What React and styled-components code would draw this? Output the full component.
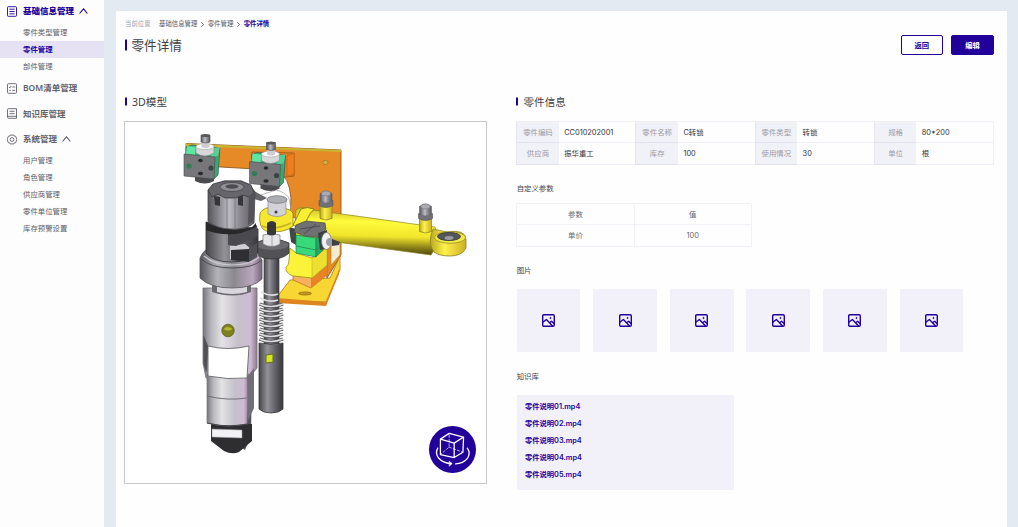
import React from 'react';
import styled, { createGlobalStyle, css } from 'styled-components';

const PRIMARY = '#22009a';

const GlobalStyle = createGlobalStyle`
  * { box-sizing: border-box; }
  body {
    margin: 0;
    background: #e4eaf2;
    color: #44444c;
    font-family: Inter, "Noto Sans CJK SC", sans-serif;
    overflow: hidden;
  }
`;

const Page = styled.div`
  display: flex;
  height: 527px;
  width: 1018px;
`;

const Sidebar = styled.nav`
  flex: none;
  width: 103.5px;
  background: #fdfdfe;
`;

const GroupHeader = styled.div`
  display: flex;
  align-items: center;
  height: ${(p) => (p.$first ? '24px' : '25.5px')};
  padding: 0 0 ${(p) => (p.$first ? '2px' : '0')} 7px;
  font: 600 8.5px/12px "Noto Sans", "Noto Sans CJK SC", sans-serif;
  font-weight: ${(p) => (p.$active ? 800 : 600)};
  color: ${(p) => (p.$active ? PRIMARY : '#62626b')};
  white-space: nowrap;
`;

const GroupIcon = styled.svg`
  flex: none;
  width: 10px;
  height: 11px;
  margin-right: 6px;
  fill: none;
  stroke: currentColor;
  stroke-width: 0.9;
`;

const Chevron = styled.svg`
  width: 9px;
  height: 6px;
  margin-left: 5px;
  fill: none;
  stroke: currentColor;
  stroke-width: 1.1;
`;

const SubItem = styled.div`
  height: 17.1px;
  padding-left: 23px;
  font-size: 7.4px;
  line-height: 17.6px;
  color: #5c5c64;
  font-weight: 400;
  ${(p) =>
    p.$active &&
    css`
      background: #e6e2f4;
      color: ${PRIMARY};
      font-weight: 700;
    `}
`;

const Panel = styled.main`
  flex: 1;
  margin: 11px 11px 0 12.5px;
  padding: 8px 13px 0 8px;
  background: #fefefe;
`;

const Breadcrumb = styled.div`
  display: flex;
  align-items: center;
  height: 10px;
  font-size: 6.4px;
  line-height: 10px;
  color: #55555d;
`;

const CrumbLabel = styled.span`
  width: 35px;
  padding-left: 1px;
  color: #a2a2aa;
`;

const CrumbArrow = styled.svg`
  width: 3px;
  height: 5px;
  margin: 0 3.7px;
  fill: none;
  stroke: #44444c;
  stroke-width: 0.8;
`;

const CrumbCurrent = styled.span`
  color: ${PRIMARY};
  font-weight: 700;
`;

const TitleRow = styled.header`
  display: flex;
  justify-content: space-between;
  height: 20px;
  margin-top: 6px;
`;

const Heading = styled.h2`
  display: flex;
  align-items: center;
  gap: ${(p) => (p.$large ? '4.5px' : '5px')};
  height: ${(p) => (p.$large ? '21px' : '14px')};
  margin: 0;
  padding-left: ${(p) => (p.$flush ? '0.3px' : '1px')};
  font: 400 ${(p) => (p.$large ? '12.6px/20px' : '10.6px/14px')} "Noto Sans", "Noto Sans CJK SC", sans-serif;
  color: #3e3e46;

  &::before {
    content: '';
    width: 2px;
    height: ${(p) => (p.$large ? '11px' : '8px')};
    background: ${PRIMARY};
    transform: translateY(-0.5px);
  }
`;

const Actions = styled.div`
  display: flex;
  gap: 8px;
`;

const Button = styled.button`
  width: ${(p) => (p.$filled ? '43px' : '42.5px')};
  height: 20px;
  padding: 0;
  border: 1.5px solid ${PRIMARY};
  border-radius: 2px;
  background: ${(p) => (p.$filled ? PRIMARY : '#fff')};
  color: ${(p) => (p.$filled ? '#fff' : PRIMARY)};
  font: 700 7.3px/16px "Noto Sans CJK SC", sans-serif;
`;

const Columns = styled.div`
  display: flex;
  gap: 29.2px;
  margin-top: 40px;
`;

const ModelColumn = styled.section`
  flex: none;
  width: 363px;
`;

const InfoColumn = styled.section`
  flex: 1;
`;

const ModelView = styled.div`
  position: relative;
  height: 363px;
  margin-top: 12px;
  border: 1px solid #c9c9cd;
  background: #fff;
`;

const ModelDrawing = styled.svg`
  display: block;
  width: 361px;
  height: 361px;
`;

const RotateButton = styled.button`
  position: absolute;
  right: 10.5px;
  bottom: 10.5px;
  width: 47px;
  height: 47px;
  padding: 0;
  border: 0;
  border-radius: 50%;
  background: ${PRIMARY};

  svg {
    display: block;
    width: 47px;
    height: 47px;
    fill: none;
    stroke: #fff;
    stroke-width: 3.8;
    stroke-linecap: round;
    stroke-linejoin: round;
  }
`;

const InfoGrid = styled.dl`
  display: grid;
  grid-template-columns: repeat(4, 42.5px 1fr);
  grid-auto-rows: 21.25px;
  margin: 12px 0 0;
  border: solid #f1eef7;
  border-width: 1px 1px 0 0;
  font-size: 7.4px;
  line-height: 21px;
`;

const InfoLabel = styled.dt`
  border-bottom: 1px solid #e4e1ee;
  border-left: 1px solid #e8e5f1;
  background: #f1f1f8;
  color: #9c9ca6;
  text-align: center;
`;

const InfoValue = styled.dd`
  margin: 0;
  padding-left: 5.5px;
  border-bottom: 1px solid #f1eef7;
  color: #34343c;
`;

const Label = styled.h3`
  height: 12px;
  margin: ${(p) => p.$top}px 0 0 0.5px;
  font-size: 7.4px;
  font-weight: 400;
  line-height: 12px;
`;

const ParamGrid = styled.div`
  display: grid;
  grid-template-columns: 117.5px 117px;
  grid-auto-rows: 21.25px;
  width: 235px;
  margin-top: 8.5px;
  border: solid #f3f0f8;
  border-width: 1px 0 0 1px;
`;

const ParamCell = styled.div`
  border: solid #f3f0f8;
  border-width: 0 1px 1px 0;
  color: #66666e;
  font-size: 7.4px;
  line-height: 21px;
  text-align: center;
`;

const Thumbs = styled.div`
  display: flex;
  gap: 12.9px;
  margin: 12.3px 0 0 0.5px;
`;

const Thumb = styled.div`
  display: grid;
  place-items: center;
  width: 63.7px;
  height: 63.5px;
  border-radius: 1px;
  background: #f2f1fa;

  svg {
    width: 13px;
    height: 13px;
    fill: none;
    stroke: ${PRIMARY};
    stroke-width: 1.4;
    stroke-linejoin: round;
  }
`;

const FileList = styled.ul`
  width: 217px;
  height: 95.5px;
  margin: 12px 0 0 0.5px;
  padding: 3.5px 0 0 8.2px;
  border-radius: 1px;
  background: #f2f1fa;
  list-style: none;
`;

const FileItem = styled.li`
  height: 17.05px;
  color: ${PRIMARY};
  font-size: 7.3px;
  font-weight: 600;
  line-height: 17.05px;
`;

const icons = {
  base: (
    <>
      <rect x="0.5" y="0.7" width="9" height="9.6" rx="0.8" />
      <path d="M2.4 3.2h5.2M2.4 5.5h5.2M2.4 7.8h5.2" />
    </>
  ),
  bom: (
    <>
      <rect x="0.5" y="0.7" width="9" height="9.6" rx="0.8" />
      <path d="M2 4l.9.8L4.2 3M5.4 4h2.8M2.2 7.4h1.6M5.4 7.4h2.8" />
    </>
  ),
  book: (
    <path d="M1.6.7h7.9v9.6H1.8C.9 10.3.5 9.8.5 9.1V1.7c0-.7.4-1 1.1-1zM.6 8.3h8.9M2.6 3.3h4.9M2.6 5.6h4.9" />
  ),
  gear: (
    <>
      <path d="M3 1.100h4l.6 1.200h1.100L9.800 5.500 8.700 8.700H7.600L7 9.900H3l-.6-1.200H1.300L.2 5.500l1.100-3.200h1.100z" />
      <circle cx="5" cy="5.500" r="1.900" />
    </>
  ),
};

const menu = [
  { title: '基础信息管理', icon: 'base', active: true, items: ['零件类型管理', '零件管理', '部件管理'] },
  { title: 'BOM清单管理', icon: 'bom' },
  { title: '知识库管理', icon: 'book' },
  { title: '系统管理', icon: 'gear', items: ['用户管理', '角色管理', '供应商管理', '零件单位管理', '库存预警设置'] },
];

const info = [
  ['零件编码', 'CC010202001'],
  ['零件名称', 'C转锁'],
  ['零件类型', '转锁'],
  ['规格', '80*200'],
  ['供应商', '振华重工'],
  ['库存', '100'],
  ['使用情况', '30'],
  ['单位', '根'],
];

const files = ['零件说明01.mp4', '零件说明02.mp4', '零件说明03.mp4', '零件说明04.mp4', '零件说明05.mp4'];

function Valve({ x, y }) {
  return (
    <g transform={`translate(${x} ${y})`}>
      <path d="M11 40h19v7q-9 5-19 0z" fill="#4b4b4f" />
      <path d="M2 13l6-2 28 3-2 27-4 4-28-4z" fill="#37a873" stroke="#3c5c4e" strokeWidth="0.7" />
      <path d="M3 12l9 1-1 8-9-1z" fill="#5fe5a4" />
      <path d="M28 14l8-1-2 9-7 1z" fill="#55cf95" />
      <path d="M0 20l31 3-1 22-30-3z" fill="#77777a" stroke="#4c4c50" strokeWidth="0.6" />
      <circle cx="5" cy="32" r="2.600" fill="#317c56" />
      <circle cx="27" cy="34" r="2.600" fill="#38463f" />
      <ellipse cx="16.500" cy="26.500" rx="2.300" ry="1.700" fill="#29292c" />
      <ellipse cx="16.500" cy="39.500" rx="2.600" ry="1.700" fill="#29292c" />
      <path d="M12 12h18v7q-9 6-18 0z" fill="#d7d7da" stroke="#8c8c91" strokeWidth="0.6" />
      <ellipse cx="21" cy="12.500" rx="9" ry="3" fill="#fafafb" stroke="#9a9a9f" strokeWidth="0.5" />
      <path d="M17.500 8h8v5q-4 2-8 0z" fill="#cdcdd2" />
      <path d="M17 1h9v7q-4 2-9 0z" fill="url(#steel)" stroke="#4a4a4e" strokeWidth="0.6" />
      <ellipse cx="21.500" cy="1.500" rx="4.500" ry="1.600" fill="#58585d" />
    </g>
  );
}

function Nipple({ x, y }) {
  return (
    <g transform={`translate(${x} ${y})`}>
      <path d="M1 14h12v14q-6 3-12 0z" fill="url(#brass)" stroke="#77711c" strokeWidth="0.6" />
      <path d="M0 10h14v5q-7 4-14 0z" fill="#717177" stroke="#505055" strokeWidth="0.6" />
      <path d="M1 3q6-5 12 0v8q-6 3-12 0z" fill="url(#steel)" stroke="#66666c" strokeWidth="0.6" />
      <ellipse cx="7" cy="3" rx="4.500" ry="2.400" fill="#aaaab1" stroke="#77777d" strokeWidth="0.6" />
    </g>
  );
}

function PartModel() {
  return (
    <ModelDrawing viewBox="125 122 361 361">
      <defs>
        <linearGradient id="steel">
          <stop offset="0" stopColor="#56565b" />
          <stop offset="0.25" stopColor="#8f8d94" />
          <stop offset="0.45" stopColor="#bcbac2" />
          <stop offset="0.65" stopColor="#918f96" />
          <stop offset="1" stopColor="#5b575e" />
        </linearGradient>
        <linearGradient id="body">
          <stop offset="0" stopColor="#77767c" />
          <stop offset="0.15" stopColor="#b9b7be" />
          <stop offset="0.35" stopColor="#e3e2e6" />
          <stop offset="0.65" stopColor="#c5c1ca" />
          <stop offset="0.88" stopColor="#cfbad4" />
          <stop offset="1" stopColor="#8d798f" />
        </linearGradient>
        <linearGradient id="collar">
          <stop offset="0" stopColor="#56555b" />
          <stop offset="0.28" stopColor="#b5b3ba" />
          <stop offset="0.55" stopColor="#8b8990" />
          <stop offset="0.85" stopColor="#bba8be" />
          <stop offset="1" stopColor="#75667a" />
        </linearGradient>
        <linearGradient id="dark">
          <stop offset="0" stopColor="#46464a" />
          <stop offset="0.35" stopColor="#929197" />
          <stop offset="0.65" stopColor="#67666c" />
          <stop offset="1" stopColor="#38363b" />
        </linearGradient>
        <linearGradient id="barrel" x1="0.54" y1="0" x2="0.46" y2="1">
          <stop offset="0.1" stopColor="#d6cb2c" />
          <stop offset="0.3" stopColor="#fffb3c" />
          <stop offset="0.6" stopColor="#f0e52b" />
          <stop offset="0.8" stopColor="#92871a" />
          <stop offset="1" stopColor="#3c380c" />
        </linearGradient>
        <linearGradient id="brass">
          <stop offset="0" stopColor="#b8aa22" />
          <stop offset="0.4" stopColor="#fff14a" />
          <stop offset="1" stopColor="#cbb126" />
        </linearGradient>
      </defs>

      {/* mounting plate */}
      <path d="M186 143.500l155 6.500v105l-14 23-6-50-31-12 1-18q-2-22-13-26l-5-2-87-5z" fill="#e68a28" stroke="#92571c" strokeWidth="0.9" />
      <path d="M186 143.500l155 6.500v2l-155-6z" fill="#c9b531" />
      <path d="M252 152l42 1v23l-8 1-35-8z" fill="#e07f22" stroke="#9a5418" strokeWidth="0.8" />
      <path d="M287 156l7-3v21l-7 2z" fill="#f07c1c" stroke="#b25f18" strokeWidth="0.5" />
      <ellipse cx="325.500" cy="162.500" rx="2.600" ry="2.200" fill="#d2b03e" stroke="#8e6923" strokeWidth="0.6" />
      <path d="M250 200q12-6 26-10q9 2 13 8 3 10 1 22" fill="none" stroke="#a5a5ab" strokeWidth="0.8" />
      <path d="M252 190l15 8-6 3-10-3z" fill="#66666b" />
      <Valve x={184} y={134} />
      <Valve x={249.500} y={141.500} />

      {/* lower bracket */}
      <path d="M290 280l40-2 10-22v14l-14 32-49-2v-3z" fill="#f8d735" stroke="#a87318" strokeWidth="0.8" />
      <path d="M277 298l49 4 12-30 1-3v5l-13 32-49-3z" fill="#df851f" />
      <ellipse cx="305" cy="293.500" rx="6.500" ry="1.600" fill="#c19521" stroke="#8d6519" strokeWidth="0.600" />
      <path d="M331 243l9-2v14l-9 10z" fill="#f3ecd0" stroke="#c28c24" strokeWidth="0.7" />

      {/* hydraulic cylinder */}
      <path d="M296 210q6-5 17 0l122 17q6 14-4 28l-95-13-41-7z" fill="url(#barrel)" stroke="#8d841f" strokeWidth="0.7" />
      <path d="M293 225l8-16q6-3 13 0-9 9-9 22z" fill="#f8ef35" stroke="#827820" strokeWidth="0.9" />
      <path d="M433 229q9 2 14 3 18-3 19 7v9q-4 8-16 8-11 0-16-4-7-9-1-23z" fill="url(#brass)" stroke="#8b8121" strokeWidth="0.8" />
      <ellipse cx="450" cy="237.500" rx="15.500" ry="5.800" fill="#f2ea46" stroke="#8f8527" strokeWidth="0.700" />
      <ellipse cx="449" cy="236.500" rx="11.500" ry="4" fill="#55555b" stroke="#38383c" strokeWidth="0.9" />
      <ellipse cx="449" cy="238" rx="4.500" ry="1.900" fill="#9a9aa0" />
      <Nipple x={319} y={190.500} />
      <Nipple x={418.500} y={203.500} />

      {/* clamp block */}
      <path d="M293 275l18 2 16-15v13l-16 13-18-8z" fill="#f9b05c" stroke="#b4691f" strokeWidth="0.7" />
      <path d="M311 277l16-14v12l-16 13z" fill="#e98326" />
      <path d="M290 248l6 5 16 5 15-10v17l-15 13-19-2q-8-3-7-9 3-2 3-7z" fill="#fbf33a" stroke="#9a8f1a" strokeWidth="0.8" />
      <path d="M312 258l15-10v17l-15 13z" fill="#ecdf2f" stroke="#b5a91e" strokeWidth="0.5" />
      <path d="M289 227l7 2v16l-5-3z" fill="#3f4846" />
      <path d="M296 235l20 3v19l-20-4z" fill="#37d97a" stroke="#247d4d" strokeWidth="0.7" />
      <path d="M316 238l7-5v17l-7 7z" fill="#27a860" stroke="#247d4d" strokeWidth="0.6" />
      <path d="M296 246l20 4 7-5" fill="none" stroke="#247d4d" strokeWidth="0.7" />
      <path d="M296 225l10-4 19 2 1 6-7 8-14-1-11-4z" fill="#707073" stroke="#48484c" strokeWidth="0.7" />
      <path d="M300 229l20-3M304 234l12-10" stroke="#4f4f53" />
      <path d="M318 233l9-3v18l-7 2z" fill="#3d4042" />
      <ellipse cx="326.500" cy="241" rx="5" ry="8.500" fill="#f1f1f4" stroke="#77777d" strokeWidth="0.8" />
      <circle cx="330" cy="242" r="4" fill="#9d9da4" />
      <path d="M332 239l8 3-1 3-7 1z" fill="#414148" />

      {/* guide rod with spring */}
      <path d="M264 254h15v90h-15z" fill="url(#dark)" stroke="#48484c" strokeWidth="0.7" />
      <path d="M255 243q17-8 34 0v10q-6 6-17 6t-17-6z" fill="#525156" stroke="#333337" strokeWidth="0.8" />
      <ellipse cx="272" cy="245" rx="16.500" ry="5" fill="#6b6a70" />
      <path d="M260 213q5-7 13-5 17-1 20 5v13q-9 8-27 5-8-3-6-18z" fill="#f6e831" stroke="#8e8117" strokeWidth="0.8" />
      <path d="M262 226q13 5 29-3" fill="none" stroke="#c4b41f" strokeWidth="1.800" />
      <path d="M268 199h18v15q-9 5-18 0z" fill="#d3d2d9" stroke="#86868c" strokeWidth="0.7" />
      <ellipse cx="277" cy="199.500" rx="10" ry="3.800" fill="#adadb4" stroke="#6f6f76" strokeWidth="0.7" />
      <circle cx="276" cy="212" r="1.500" fill="#3f3f44" />
      <path d="M263 235q8-3 17 0v9q-8 5-17 0z" fill="#e6e6ea" stroke="#77777c" strokeWidth="0.7" />
      <path d="M272 236v10" stroke="#909096" strokeWidth="0.8" />
      <path d="M267 223q5-4 9 0v11q-4 3-9 0z" fill="#38383c" />
      {[305, 310, 315, 320, 325, 330, 335, 340].map((y) => (
        <g key={y} fill="none">
          <path d={`M259.500 ${y - 1}q11 5 23.500 0`} stroke="#55555a" strokeWidth="3.200" />
          <path d={`M259.500 ${y - 1}q11 5 23.500 0`} stroke="#dcdce0" strokeWidth="1.700" />
        </g>
      ))}
      <path d="M261 292q9 5 17 2M260 298q9 5 18 2" fill="none" stroke="#dcdce0" strokeWidth="1.700" />
      <path d="M259 343q12 3 24 0v66q-4 4-12 4t-12-4z" fill="url(#dark)" stroke="#3c3c40" strokeWidth="0.8" />
      <path d="M266 355l7-1v8l-7 1z" fill="#d3e62a" stroke="#656d20" strokeWidth="1" />

      {/* main spindle */}
      <path d="M241 366l11 4-1 66-6 14-6-4z" fill="#56525a" />
      <path d="M211 424h41v17l-13 11q-7 3-15-1l-13-10z" fill="#2e2e31" />
      <path d="M212 429l30 1v8l-30-1z" fill="#f2f2f5" stroke="#95959a" strokeWidth="0.5" />
      <path d="M203 288h54v80l-8 10H206l-3-15z" fill="url(#body)" stroke="#707075" strokeWidth="0.8" />
      <path d="M203.500 335l5 12-2 26-3-9z" fill="#505055" />
      <path d="M207 374h42l-2 50q-20 4-40-1z" fill="url(#body)" stroke="#77777c" strokeWidth="0.7" />
      <path d="M247 377l7-9v40l-6 13z" fill="#716e75" />
      <path d="M208 346q20 5 41 0l-2 32q-20 2-39-2z" fill="#fff" stroke="#67676c" strokeWidth="0.9" />
      <path d="M207 396q20 5 40 2" fill="none" stroke="#67676c" strokeWidth="0.9" />
      <path d="M207 423q20 5 41 1" fill="none" stroke="#47474b" strokeWidth="1.200" />
      <circle cx="228" cy="330.500" r="6.300" fill="#7f7e20" stroke="#5d5c1c" strokeWidth="0.700" />
      <path d="M223.500 329q4-4 9 0-4 3-9 0z" fill="#b3b831" />
      <path d="M212 285h39v7q-18 7-39 0z" fill="#6b6a70" />
      <path d="M217 286h30v6q-15 4-30 0z" fill="#d9d7dd" />
      <path d="M200 258q4-9 9-9l47 2 6 9v19q-9 9-30 9-22 0-32-10z" fill="url(#collar)" stroke="#58585d" strokeWidth="0.8" />
      <path d="M201 259q10 9 31 9t30-8" fill="none" stroke="#4e4d53" strokeWidth="1" />
      <path d="M204 256q10 9 28 9t27-8" fill="none" stroke="#cac8cf" strokeWidth="1.200" />
      <path d="M206 222l52 7v23q-7 10-27 10-18 0-25-9z" fill="url(#dark)" stroke="#3b3b3f" strokeWidth="0.9" />
      <path d="M230 246l15-2 6 5v13l-21-3z" fill="#d2d0d7" />
      <path d="M231 250l18-1v13l-18-2z" fill="#303034" />
      <path d="M249 248l8-5v14l-8 5z" fill="#515056" />
      <path d="M228 232l22-2 7-5 1 11-22 10-8-1z" fill="#4a494f" />
      <path d="M206 222q22 12 46 5l4-4v4q-24 13-50 3z" fill="#28282b" />
      <path d="M208 190l5-5 12-4h16l9 4 5 7-1 31q-8 7-23 6-14 0-23-8z" fill="url(#steel)" stroke="#46464a" strokeWidth="0.8" />
      <path d="M208 190l5-6 11-3h17l10 4 3 8-5 4-6-2-7 3h-11l-7-4-6 3z" fill="#66656b" stroke="#3a3a3e" strokeWidth="0.8" />
      <ellipse cx="232" cy="187" rx="12" ry="4.500" fill="#8f8e95" stroke="#3e3e42" strokeWidth="0.7" />
      <ellipse cx="232" cy="186.500" rx="6.500" ry="2.200" fill="#4c4c51" />
      <path d="M214 196l6 1v9l-5-1zM238 197l5-2v11l-5-1z" fill="#37373b" />
      <path d="M227 199v29M235 199v29" stroke="#77757c" strokeWidth="0.800" />
      <path d="M249 196l5-4v28l-6 5z" fill="#545359" />
    </ModelDrawing>
  );
}

function NavGroup({ group, first }) {
  return (
    <>
      <GroupHeader $active={group.active} $first={first}>
        <GroupIcon viewBox="0 0 10 11">{icons[group.icon]}</GroupIcon>
        {group.title}
        {group.items && (
          <Chevron viewBox="0 0 9 6">
            <path d="M.6 5.500L4.500.8l3.900 4.700" />
          </Chevron>
        )}
      </GroupHeader>
      {(group.items || []).map((item) => (
        <SubItem key={item} $active={item === '零件管理'}>{item}</SubItem>
      ))}
    </>
  );
}

function Arrow() {
  return (
    <CrumbArrow viewBox="0 0 3 5">
      <path d="M.3.3l2.300 2.200L.3 4.700" />
    </CrumbArrow>
  );
}

export default function App() {
  return (
    <Page>
      <GlobalStyle />
      <Sidebar>
        {menu.map((group, i) => (
          <NavGroup key={group.title} group={group} first={i === 0} />
        ))}
      </Sidebar>
      <Panel>
        <Breadcrumb>
          <CrumbLabel>当前位置</CrumbLabel>
          <span>基础信息管理</span>
          <Arrow />
          <span>零件管理</span>
          <Arrow />
          <CrumbCurrent>零件详情</CrumbCurrent>
        </Breadcrumb>
        <TitleRow>
          <Heading as="h1" $large>零件详情</Heading>
          <Actions>
            <Button>返回</Button>
            <Button $filled>编辑</Button>
          </Actions>
        </TitleRow>
        <Columns>
          <ModelColumn>
            <Heading>3D模型</Heading>
            <ModelView>
              <PartModel />
              <RotateButton aria-label="3D">
                <svg viewBox="88 77 140 140">
                  <path d="M148 99l43 11-2 45-26 16-41-9v-46zM122 116l41 12 28-18M163 128v43" />
                  <path d="M148 104v36l-24 20M148 140l38 14" strokeWidth="2" strokeDasharray="7 6" />
                  <path d="M114 143c-12 22 8 43 38 46M202 143c16 22-5 45-35 47" />
                  <path d="M149 183l8 6-8 7z" fill="#fff" strokeWidth="2" />
                </svg>
              </RotateButton>
            </ModelView>
          </ModelColumn>
          <InfoColumn>
            <Heading $flush>零件信息</Heading>
            <InfoGrid>
              {info.map(([label, value]) => (
                <React.Fragment key={label}>
                  <InfoLabel>{label}</InfoLabel>
                  <InfoValue>{value}</InfoValue>
                </React.Fragment>
              ))}
            </InfoGrid>
            <Label $top={18}>自定义参数</Label>
            <ParamGrid>
              {['参数', '值', '单价', '100'].map((text) => (
                <ParamCell key={text}>{text}</ParamCell>
              ))}
            </ParamGrid>
            <Label $top={18}>图片</Label>
            <Thumbs>
              {[1, 2, 3, 4, 5, 6].map((n) => (
                <Thumb key={n}>
                  <svg viewBox="0 0 13 13">
                    <rect x="0.700" y="0.700" width="11.600" height="11.600" rx="1.200" />
                    <path d="M.8 8.300L4.400 5.500l6.200 6.500M7.600 8.800l2-1.500 2.600 2.500" />
                    <circle cx="8.500" cy="4" r="0.700" fill={PRIMARY} strokeWidth="0.500" />
                  </svg>
                </Thumb>
              ))}
            </Thumbs>
            <Label $top={18.5}>知识库</Label>
            <FileList>
              {files.map((file) => (
                <FileItem key={file}>{file}</FileItem>
              ))}
            </FileList>
          </InfoColumn>
        </Columns>
      </Panel>
    </Page>
  );
}
